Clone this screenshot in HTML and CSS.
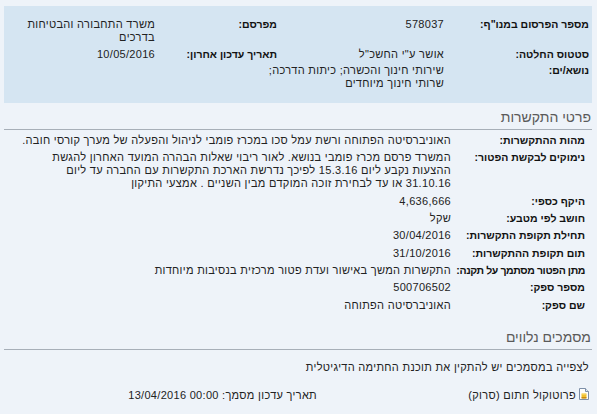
FILE: index.html
```html
<!DOCTYPE html>
<html dir="rtl" lang="he">
<head>
<meta charset="utf-8">
<title>פרטי פרסום</title>
<link rel="stylesheet" href="styles.css">
</head>
<body>
<div class="page">
  <div class="summary">
    <div class="s-label">מספר הפרסום במנו"ף:</div>
    <div class="s-value">578037</div>
    <div class="s-label">מפרסם:</div>
    <div class="s-value">משרד התחבורה והבטיחות בדרכים</div>

    <div class="s-label r2">סטטוס החלטה:</div>
    <div class="s-value r2">אושר ע"י החשכ"ל</div>
    <div class="s-label r2">תאריך עדכון אחרון:</div>
    <div class="s-value r2">10/05/2016</div>

    <div class="s-label r3">נושא/ים:</div>
    <div class="s-value r3 nowrap">שירותי חינוך והכשרה; כיתות הדרכה;<br>שרותי חינוך מיוחדים</div>
    <div class="s-label r3"></div>
    <div class="s-value r3"></div>
  </div>

  <h2 class="section-title">פרטי התקשרות</h2>
  <div class="details">
    <div class="row"><div class="label">מהות ההתקשרות:</div><div class="value">האוניברסיטה הפתוחה ורשת עמל סכו במכרז פומבי לניהול והפעלה של מערך קורסי חובה.</div></div>
    <div class="row"><div class="label">נימוקים לבקשת הפטור:</div><div class="value nowrap">המשרד פרסם מכרז פומבי בנושא. לאור ריבוי שאלות הבהרה המועד האחרון להגשת<br>ההצעות נקבע ליום 15.3.16 לפיכך נדרשת הארכת התקשרות עם החברה עד ליום<br>31.10.16 או עד לבחירת זוכה המוקדם מבין השניים . אמצעי התיקון</div></div>
    <div class="row"><div class="label">היקף כספי:</div><div class="value">4,636,666</div></div>
    <div class="row"><div class="label">חושב לפי מטבע:</div><div class="value">שקל</div></div>
    <div class="row"><div class="label">תחילת תקופת התקשרות:</div><div class="value">30/04/2016</div></div>
    <div class="row"><div class="label">תום תקופת ההתקשרות:</div><div class="value">31/10/2016</div></div>
    <div class="row"><div class="label tight">מתן הפטור מסתמך על תקנה:</div><div class="value">התקשרות המשך באישור ועדת פטור מרכזית בנסיבות מיוחדות</div></div>
    <div class="row"><div class="label">מספר ספק:</div><div class="value">500706502</div></div>
    <div class="row"><div class="label">שם ספק:</div><div class="value">האוניברסיטה הפתוחה</div></div>
  </div>

  <h2 class="section-title second">מסמכים נלווים</h2>
  <div class="docs">
    <div class="doc-note">לצפייה במסמכים יש להתקין את תוכנת החתימה הדיגיטלית</div>
    <div class="doc-row">
      <div class="doc-name">
        <svg class="doc-icon" width="10" height="12" viewBox="0 0 10 12" aria-hidden="true">
          <path d="M0.5 0.5h6l3 3v8h-9z" fill="#fdfdfd" stroke="#7d8fa8"/>
          <path d="M6.5 0.5v3h3" fill="#e4ebf3" stroke="#7d8fa8"/>
          <rect x="2.5" y="5" width="5" height="5.5" rx="1.5" fill="#f2c12e"/>
          <rect x="2.5" y="5" width="5" height="1.6" rx="0.8" fill="#f9e08a"/>
          <rect x="2.5" y="9" width="5" height="1.5" fill="#c98a12"/>
        </svg>
        <span>פרוטוקול חתום (סרוק)</span>
      </div>
      <div class="doc-date">תאריך עדכון מסמך: 00:00 13/04/2016</div>
    </div>
  </div>
</div>
</body>
</html>
```

FILE: styles.css
```css
html, body {
  margin: 0;
  padding: 0;
}

body {
  background: #eef3f9;
  font-family: "Liberation Sans", "DejaVu Sans", Arial, sans-serif;
  font-size: 11px;
  letter-spacing: 0.3px;
  line-height: 13px;
  color: #222;
}

.page {
  padding: 6px 5px 0 4px;
}

.summary {
  background: #d5e5f2;
  padding: 12px 3px 13px 11px;
  display: grid;
  grid-template-columns: 145px 167px 122px 140px;
}

.s-label {
  font-family: "Liberation Sans", "DejaVu Sans Condensed", "DejaVu Sans", sans-serif;
  font-size: 10.5px;
  font-weight: bold;
  letter-spacing: 0;
  white-space: nowrap;
  color: #111;
}

.s-value {
  color: #222;
}

.r2 {
  padding-top: 4px;
}

.r3 {
  padding-top: 3px;
}

.nowrap {
  white-space: nowrap;
}

.section-title {
  margin: 4px 0 0;
  padding: 0 1px 2px 0;
  font-size: 14px;
  letter-spacing: 0;
  line-height: 20px;
  font-weight: normal;
  color: #5a5a5a;
  border-bottom: 1px solid #a7afb8;
}

.section-title.second {
  margin-top: 13px;
}

.details {
  padding: 2px 7px 0 8px;
}

.row {
  display: flex;
  padding: 2px 0 2.33px;
}

.label {
  flex: none;
  width: 134px;
  font-family: "Liberation Sans", "DejaVu Sans Condensed", "DejaVu Sans", sans-serif;
  font-size: 10.5px;
  font-weight: bold;
  letter-spacing: 0;
  white-space: nowrap;
  color: #111;
}

.label.tight {
  letter-spacing: -0.4px;
}

.value {
  flex: 1;
  min-width: 0;
}

.docs {
  padding: 11px 3px 0 0;
}

.doc-row {
  display: flex;
  align-items: center;
  margin-top: 15px;
}

.doc-name {
  flex: none;
  width: 272px;
  display: flex;
  align-items: center;
  gap: 3px;
}

.doc-icon {
  flex: none;
  margin-top: -2px;
}
```
